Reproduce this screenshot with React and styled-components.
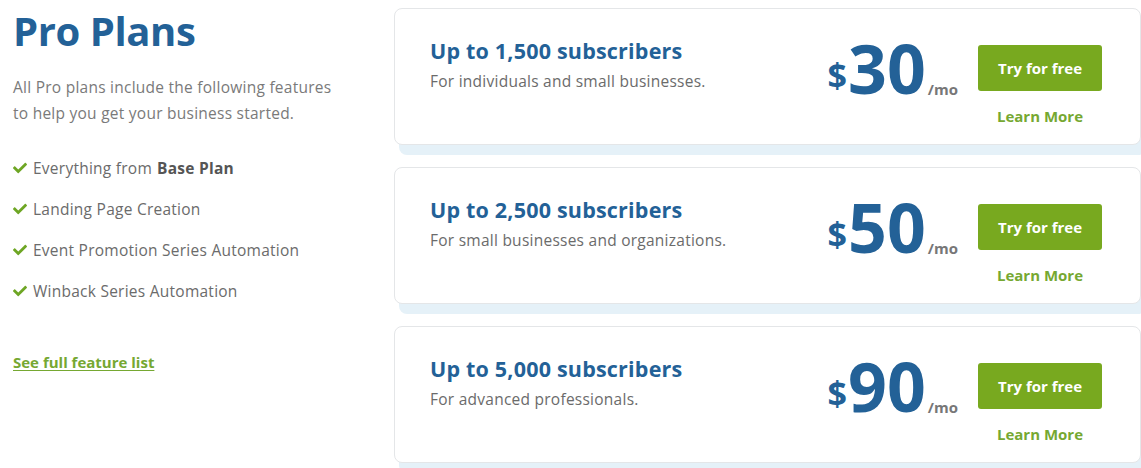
import styled, { createGlobalStyle } from "styled-components";
import { FaCheck } from "react-icons/fa";

const GlobalStyle = createGlobalStyle`
  body {
    margin: 0;
    background: #ffffff;
    font-family: "Open Sans", "Lato", sans-serif;
    overflow: hidden;
  }
`;

const Page = styled.div`
  display: flex;
  width: 1141px;
  height: 468px;
  overflow: hidden;
`;

const Intro = styled.div`
  width: 381px;
  padding-left: 13px;
  flex-shrink: 0;
`;

const Title = styled.h1`
  margin: 6px 0 0;
  font-size: 40px;
  line-height: 50px;
  font-weight: 700;
  letter-spacing: -0.4px;
  color: #236197;
`;

const Lead = styled.p`
  margin: 18px 0 0;
  font-size: 15.5px;
  line-height: 26px;
  letter-spacing: 0.25px;
  color: #7a7a7a;
`;

const Features = styled.ul`
  list-style: none;
  margin: 30px 0 0;
  padding: 0;
  display: flex;
  flex-direction: column;
  gap: 17px;
`;

const Feature = styled.li`
  display: flex;
  align-items: center;
  gap: 6px;
  font-size: 15.5px;
  line-height: 24px;
  letter-spacing: 0.25px;
  color: #6b6b6b;

  svg {
    color: #6ea624;
    flex-shrink: 0;
  }

  b {
    color: #555555;
    margin-left: 5px;
  }
`;

const FullList = styled.a`
  display: inline-block;
  margin-top: 49px;
  font-size: 15px;
  font-weight: 700;
  color: #76a832;
  text-decoration: underline;
  text-underline-offset: 2px;
`;

const Plans = styled.div`
  flex: 1;
  display: flex;
  flex-direction: column;
  gap: 22px;
  padding-top: 8px;
`;

const Card = styled.div`
  display: flex;
  align-items: flex-start;
  height: 137px;
  box-sizing: border-box;
  padding: 28px 38px 0 35px;
  background: #ffffff;
  border: 1px solid #e4e6e8;
  border-radius: 8px;
  box-shadow: 5px 10px 0 #e5f1f8;
`;

const Info = styled.div`
  flex: 1;
`;

const PlanName = styled.h2`
  margin: 0;
  font-size: 21.5px;
  line-height: 28px;
  font-weight: 700;
  letter-spacing: 0.2px;
  color: #236197;
`;

const PlanText = styled.p`
  margin: 6px 0 0;
  font-size: 15.5px;
  line-height: 20px;
  letter-spacing: 0.25px;
  color: #6b6b6b;
`;

const Price = styled.div`
  display: flex;
  align-items: flex-end;
  margin-top: 0;
  color: #236197;
  font-weight: 700;
`;

const Dollar = styled.span`
  font-size: 34px;
  line-height: 34px;
  margin-bottom: 7px;
  margin-right: 1px;
`;

const Amount = styled.span`
  font-size: 68px;
  line-height: 62px;
`;

const Per = styled.span`
  font-size: 15px;
  line-height: 15px;
  font-weight: 700;
  color: #777777;
  margin-left: 2px;
  margin-bottom: 2px;
`;

const Actions = styled.div`
  display: flex;
  flex-direction: column;
  align-items: center;
  margin-left: 20px;
  margin-top: 8px;
`;

const TryButton = styled.button`
  width: 124px;
  height: 46px;
  border: 0;
  border-radius: 3px;
  background: #78a91f;
  color: #ffffff;
  font-family: inherit;
  font-size: 15px;
  font-weight: 700;
  cursor: pointer;
`;

const LearnMore = styled.a`
  margin-top: 15px;
  font-size: 15px;
  font-weight: 700;
  color: #76a832;
  text-decoration: none;
`;

const plans = [
  { name: "Up to 1,500 subscribers", text: "For individuals and small businesses.", price: 30 },
  { name: "Up to 2,500 subscribers", text: "For small businesses and organizations.", price: 50 },
  { name: "Up to 5,000 subscribers", text: "For advanced professionals.", price: 90 },
];

const features = [
  <>Everything from<b>Base Plan</b></>,
  "Landing Page Creation",
  "Event Promotion Series Automation",
  "Winback Series Automation",
];

export default function App() {
  return (
    <Page>
      <GlobalStyle />
      <Intro>
        <Title>Pro Plans</Title>
        <Lead>
          All Pro plans include the following features
          <br />
          to help you get your business started.
        </Lead>
        <Features>
          {features.map((f, i) => (
            <Feature key={i}>
              <FaCheck size={14} />
              <span>{f}</span>
            </Feature>
          ))}
        </Features>
        <FullList href="#">See full feature list</FullList>
      </Intro>
      <Plans>
        {plans.map((p) => (
          <Card key={p.price}>
            <Info>
              <PlanName>{p.name}</PlanName>
              <PlanText>{p.text}</PlanText>
            </Info>
            <Price>
              <Dollar>$</Dollar>
              <Amount>{p.price}</Amount>
              <Per>/mo</Per>
            </Price>
            <Actions>
              <TryButton>Try for free</TryButton>
              <LearnMore href="#">Learn More</LearnMore>
            </Actions>
          </Card>
        ))}
      </Plans>
    </Page>
  );
}
